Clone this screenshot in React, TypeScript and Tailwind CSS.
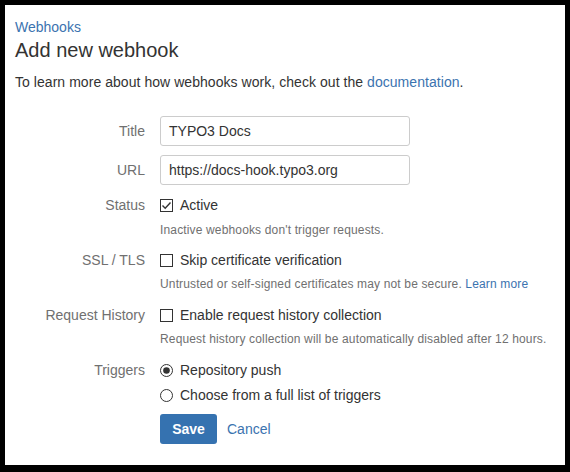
import React from 'react';

function Checkbox({ checked }: { checked?: boolean }) {
  return (
    <svg width="13" height="13" viewBox="0 0 13 13" className="shrink-0">
      <rect x="0.5" y="0.5" width="12" height="12" fill="#fff" stroke="#333" />
      {checked && <path d="M2.5 6.5 L5.2 9.2 L10.5 3.5" fill="none" stroke="#333" strokeWidth="1.4" />}
    </svg>
  );
}

function Radio({ checked }: { checked?: boolean }) {
  return (
    <svg width="13" height="13" viewBox="0 0 13 13" className="shrink-0">
      <circle cx="6.5" cy="6.5" r="6" fill="#fff" stroke="#333" />
      {checked && <circle cx="6.5" cy="6.5" r="3.3" fill="#333" />}
    </svg>
  );
}

function Row({ label, className, children }: { label?: string; className?: string; children: React.ReactNode }) {
  return (
    <div className={`flex items-center ${className ?? ''}`}>
      <div className="w-[130px] shrink-0 text-right text-[14px] leading-[20px] text-[#707070]">{label}</div>
      <div className="ml-[15px] flex-1">{children}</div>
    </div>
  );
}

export default function App() {
  return (
    <div className="w-[570px] h-[472px] bg-black p-[5px] pb-[7px] font-[family-name:Liberation_Sans,Arial,sans-serif]">
      <div className="h-full w-full bg-white px-[10px] pt-[13px] text-[#333]">
        <div className="text-[14px] leading-[18px] text-[#3b73af]">Webhooks</div>
        <h1 className="text-[20px] leading-[28px] text-[#333]">Add new webhook</h1>
        <p className="mt-[8px] text-[14px] leading-[20px] tracking-[0.05px]">
          To learn more about how webhooks work, check out the <span className="text-[#3b73af]">documentation</span>.
        </p>

        <Row label="Title" className="mt-[24px]">
          <div className="flex h-[30px] w-[250px] items-center rounded-[3px] border border-[#ccc] px-[8px] text-[14px]">TYPO3 Docs</div>
        </Row>
        <Row label="URL" className="mt-[9px]">
          <div className="flex h-[30px] w-[250px] items-center rounded-[3px] border border-[#ccc] px-[8px] text-[14px]">https://docs-hook.typo3.org</div>
        </Row>

        <Row label="Status" className="mt-[10px]">
          <div className="flex items-center gap-[7px] text-[14px] leading-[20px]">
            <Checkbox checked />
            <span>Active</span>
          </div>
        </Row>
        <Row className="mt-[7px]">
          <div className="text-[12px] leading-[16px] tracking-[0.15px] text-[#707070]">Inactive webhooks don't trigger requests.</div>
        </Row>

        <Row label="SSL / TLS" className="mt-[12px]">
          <div className="flex items-center gap-[7px] text-[14px] leading-[20px]">
            <Checkbox />
            <span>Skip certificate verification</span>
          </div>
        </Row>
        <Row className="mt-[6px]">
          <div className="text-[12px] leading-[16px] tracking-[0.15px] text-[#707070]">
            Untrusted or self-signed certificates may not be secure. <span className="text-[#3b73af]">Learn more</span>
          </div>
        </Row>

        <Row label="Request History" className="mt-[13px]">
          <div className="flex items-center gap-[7px] text-[14px] leading-[20px]">
            <Checkbox />
            <span>Enable request history collection</span>
          </div>
        </Row>
        <Row className="mt-[6px]">
          <div className="text-[12px] leading-[16px] tracking-[0.15px] text-[#707070]">Request history collection will be automatically disabled after 12 hours.</div>
        </Row>

        <Row label="Triggers" className="mt-[13px]">
          <div className="flex items-center gap-[7px] text-[14px] leading-[20px]">
            <Radio checked />
            <span>Repository push</span>
          </div>
        </Row>
        <Row className="mt-[5px]">
          <div className="flex items-center gap-[7px] text-[14px] leading-[20px]">
            <Radio />
            <span>Choose from a full list of triggers</span>
          </div>
        </Row>

        <Row className="mt-[9px]">
          <div className="flex items-center gap-[10px]">
            <div className="flex h-[30px] w-[57px] items-center justify-center rounded-[3px] bg-[#3572b0] text-[14px] font-bold text-white">Save</div>
            <span className="text-[14px] text-[#3b73af]">Cancel</span>
          </div>
        </Row>
      </div>
    </div>
  );
}
